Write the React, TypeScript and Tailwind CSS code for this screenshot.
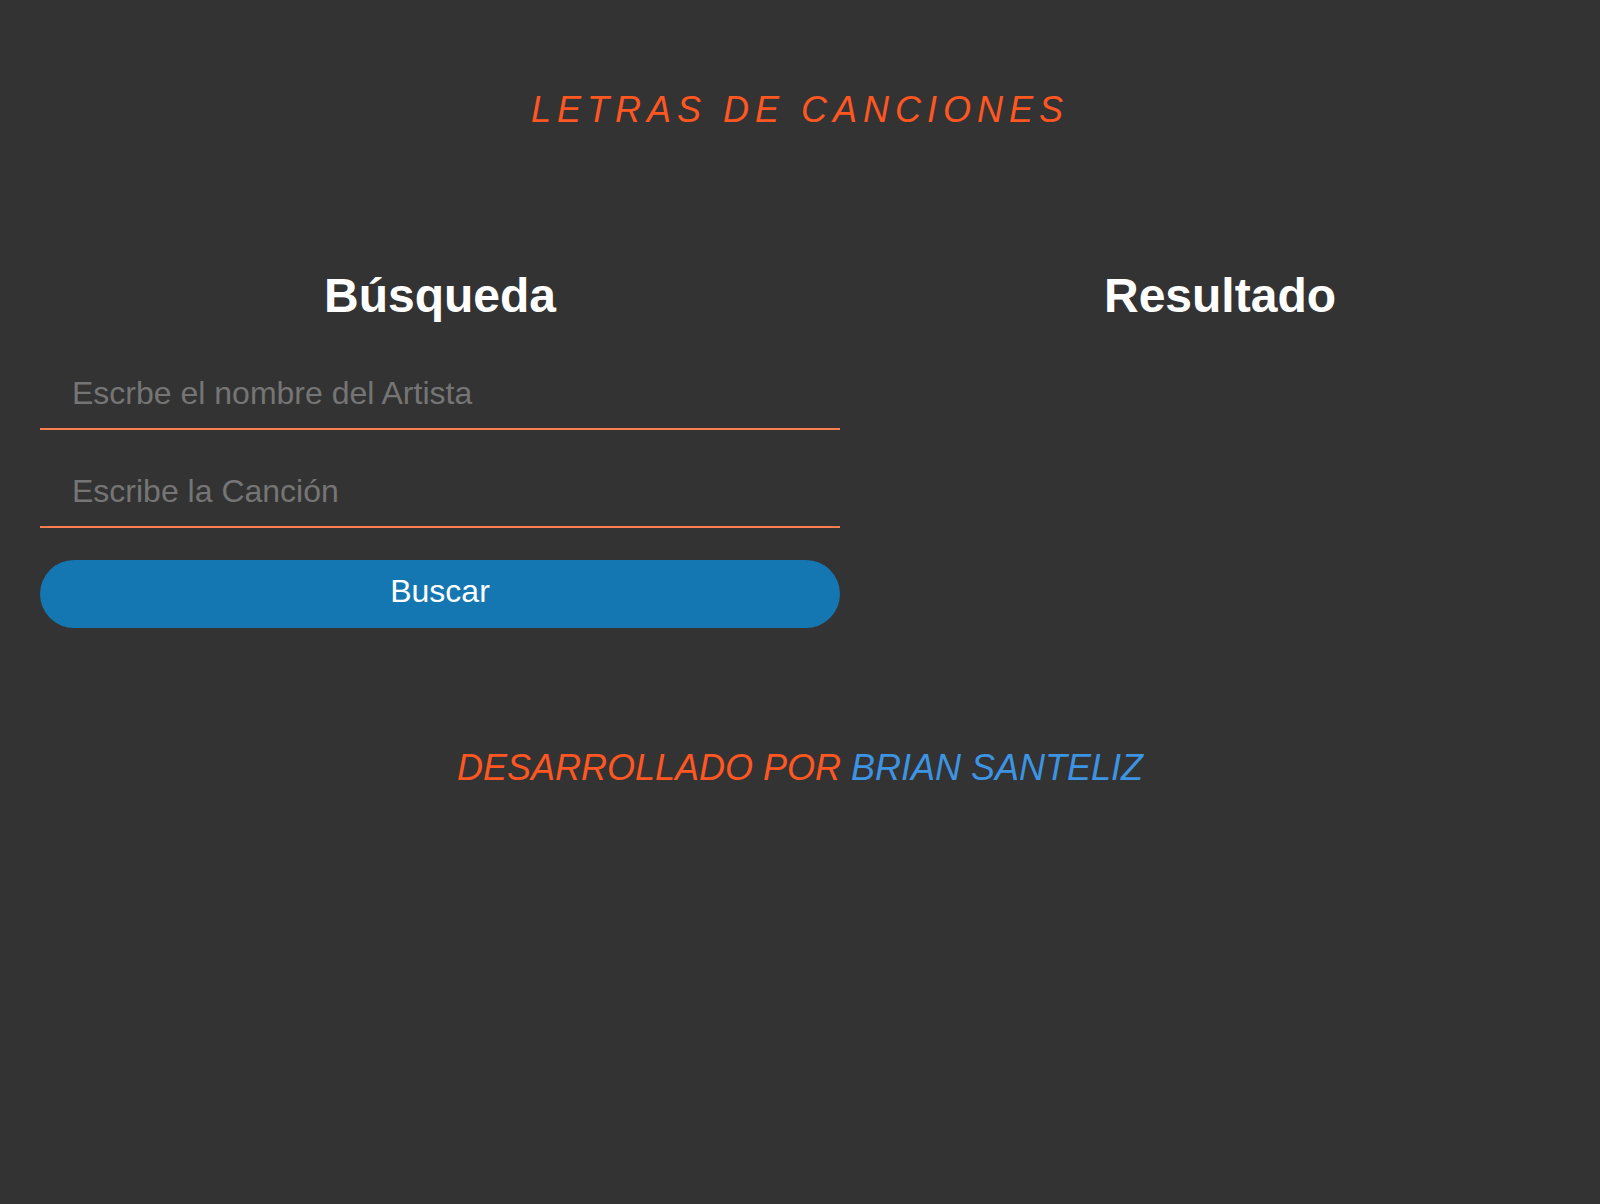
import React from 'react';

const App = () => {
  return (
    <div className="min-h-[1204px] w-full bg-[#333333] font-['Liberation_Sans',Arial,sans-serif]">
      <h1 className="pt-[92px] text-center text-[36px] leading-[36px] italic tracking-[6px] text-[#ff5722]">
        LETRAS DE CANCIONES
      </h1>

      <div className="mt-[144px] flex">
        <div className="ml-10 w-[800px]">
          <h2 className="text-center text-[48px] leading-[48px] font-bold text-white">
            Búsqueda
          </h2>
          <form className="mt-[38px] flex flex-col" onSubmit={(e) => e.preventDefault()}>
            <input
              type="text"
              placeholder="Escrbe el nombre del Artista"
              className="h-[72px] w-full border-b-2 border-[#ff7f50] bg-transparent px-8 text-[32px] text-white outline-none placeholder:text-[#757575]"
            />
            <input
              type="text"
              placeholder="Escribe la Canción"
              className="mt-[26px] h-[72px] w-full border-b-2 border-[#ff7f50] bg-transparent px-8 text-[32px] text-white outline-none placeholder:text-[#757575]"
            />
            <button
              type="submit"
              className="mt-8 h-[68px] w-full rounded-full bg-[#1477b2] pb-[6px] text-[32px] text-white"
            >
              Buscar
            </button>
          </form>
        </div>
        <div className="flex-1">
          <h2 className="text-center text-[48px] leading-[48px] font-bold text-white">
            Resultado
          </h2>
        </div>
      </div>

      <p className="mt-[122px] text-center text-[36px] leading-[36px] italic text-[#ff5722]">
        DESARROLLADO POR <span className="text-[#3d94e3]">BRIAN SANTELIZ</span>
      </p>
    </div>
  );
};

export default App;
